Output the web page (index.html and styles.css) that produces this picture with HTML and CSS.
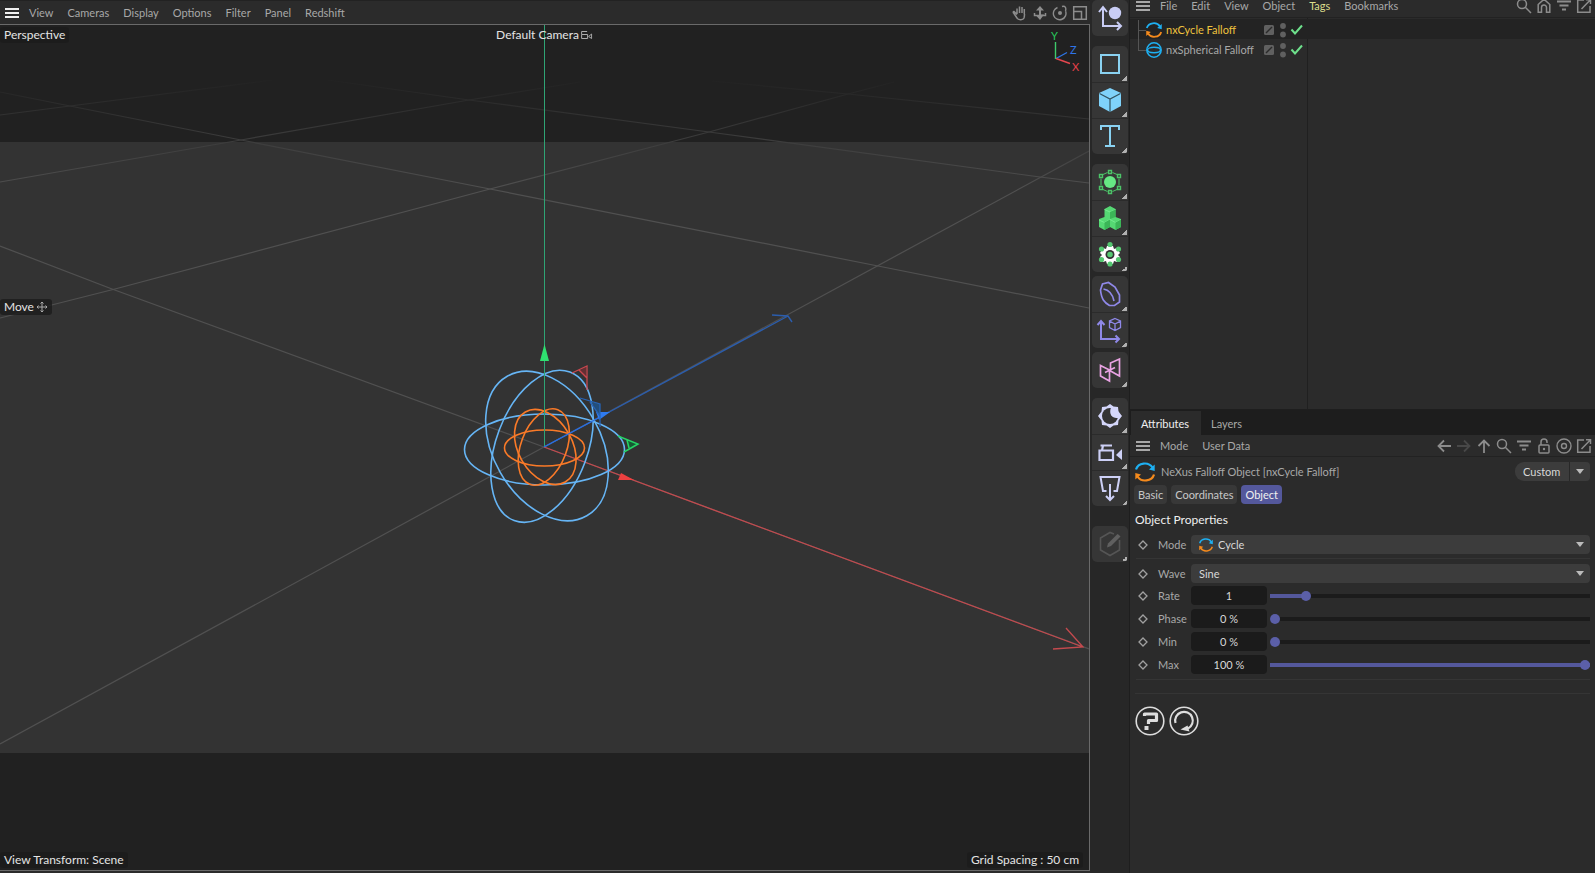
FILE: index.html
```html
<!DOCTYPE html>
<html lang="en">
<head>
<meta charset="utf-8">
<title>Falloff scene</title>
<link rel="stylesheet" href="styles.css">
</head>
<body>
<svg class="defs" aria-hidden="true">
  <symbol id="burger" viewBox="0 0 14 12"><path d="M0 2h14M0 6h14M0 10h14" stroke="currentColor" stroke-width="2"/></symbol>
  <symbol id="cycle" viewBox="0 0 20 20"><g fill="none" stroke-width="2.2"><path d="M1 7.500A9 8 0 0 1 17.500 5.500" stroke="#1eb0f2"/><path d="M19 12.500A9 8 0 0 1 2.500 14.500" stroke="#f58a1c"/></g><path d="M19.700 2.500v6.500l-5.700-1.500z" fill="#1eb0f2"/><path d="M.3 17.500v-6.500l5.700 1.500z" fill="#f58a1c"/></symbol>
  <symbol id="sphere" viewBox="0 0 16 16"><g fill="none" stroke="#1eb0f2" stroke-width="1.500"><circle cx="8" cy="8" r="7.200"/><ellipse cx="8" cy="8" rx="6.500" ry="2.700"/></g></symbol>
  <symbol id="search" viewBox="0 0 16 16"><g fill="none" stroke="currentColor" stroke-width="1.500"><circle cx="6" cy="6" r="4.500"/><path d="M9.300 9.300L15 15"/></g></symbol>
  <symbol id="filter" viewBox="0 0 16 16"><path d="M1 3.500h14M3.500 7.500h9M6 11.500h4" stroke="currentColor" stroke-width="1.800"/></symbol>
  <symbol id="popout" viewBox="0 0 16 16"><path d="M8 2H1.700v12.300H14V8M10 1.700h4.500V6M14.500 1.700L5.500 11" fill="none" stroke="currentColor" stroke-width="1.500"/></symbol>
  <symbol id="home" viewBox="0 0 16 16"><path d="M2.200 14.300V6.500L8 1.200l5.800 5.300v7.800H10.500V9.500a2.500 2.500 0 0 0-5 0v4.800z" fill="none" stroke="currentColor" stroke-width="1.500"/></symbol>
  <symbol id="left" viewBox="0 0 16 16"><path d="M15 8H2.500M8 2.500L2.500 8L8 13.500" fill="none" stroke="currentColor" stroke-width="1.800"/></symbol>
  <symbol id="lock" viewBox="0 0 16 16"><g fill="none" stroke="currentColor" stroke-width="1.500"><rect x="3" y="7" width="10" height="8" rx="1"/><path d="M5 7V4a3 3 0 0 1 6 0v1"/></g><circle cx="8" cy="11" r="1.200" fill="currentColor"/></symbol>
  <symbol id="target" viewBox="0 0 16 16"><g fill="none" stroke="currentColor" stroke-width="1.400"><circle cx="8" cy="8" r="7"/><circle cx="8" cy="8" r="2.500"/></g></symbol>
  <symbol id="slash" viewBox="0 0 10 10"><rect width="10" height="10" rx="1.500" fill="#606060"/><path d="M2 8L8 2" stroke="#2a2a2a" stroke-width="1.500"/></symbol>
  <symbol id="dots" viewBox="0 0 6 16"><circle cx="3" cy="4" r="2.900" fill="#606060"/><circle cx="3" cy="12.500" r="2.900" fill="#606060"/></symbol>
  <symbol id="check" viewBox="0 0 14 12"><path d="M1.500 5.500L5 9.500L12 1.500" fill="none" stroke="#6ee08c" stroke-width="2"/></symbol>
  <symbol id="key" viewBox="0 0 10 10"><path d="M5 1L9 5L5 9L1 5z" fill="none" stroke="#a0a0a0" stroke-width="1.300"/></symbol>
</svg>
<div class="app">
  <main class="view">
    <header class="menubar viewbar">
      <button class="icon-btn bright" aria-label="Menu"><svg class="i-burger"><use href="#burger"/></svg></button>
      <nav class="menus"><button>View</button><button>Cameras</button><button>Display</button><button>Options</button><button>Filter</button><button>Panel</button><button>Redshift</button></nav>
      <div class="tools">
        <button class="icon-btn" aria-label="Pan"><svg class="i16" viewBox="0 0 16 16"><path d="M5 9V3.500M7.500 8V1.500M10 8V2M12.300 9V4M5 9.500L2 6.500c-1 0-1 1 0 2l3 4.500c1 2 6 2.500 7 0c.5-1.500.5-2 .5-4" fill="none" stroke="currentColor" stroke-width="1.500"/></svg></button>
        <button class="icon-btn" aria-label="Dolly"><svg class="i16" viewBox="0 0 16 16"><path d="M8 1l4 4.500H9v4h3L8 15L4 10.500h3v-5H4z" fill="currentColor"/><path d="M2.500 8v2.500h11V8" fill="none" stroke="currentColor" stroke-width="1.500"/></svg></button>
        <button class="icon-btn" aria-label="Orbit"><svg class="i16" viewBox="0 0 16 16"><path d="M5.500 2.500A6.300 6.300 0 1 0 13.500 6M10 1.500c3-1 4.500 1 3.500 4.500" fill="none" stroke="currentColor" stroke-width="1.400"/><circle cx="8" cy="8" r="2" fill="currentColor"/></svg></button>
        <button class="icon-btn" aria-label="Maximize"><svg class="i16" viewBox="0 0 16 16"><path d="M1.700 1.700h12.600v12.600H1.700zM1.700 6.500h7.800v7.800" fill="none" stroke="currentColor" stroke-width="1.500"/></svg></button>
      </div>
    </header>
    <section class="viewport">
      <svg class="scene" viewBox="0 25 1089 845" preserveAspectRatio="xMidYMid slice" role="img" aria-label="Perspective scene">
        <defs>
          <linearGradient id="fade" gradientUnits="userSpaceOnUse" x1="0" y1="80" x2="0" y2="190"><stop offset="0" stop-color="#222"/><stop offset=".5" stop-color="#3a3a3a"/><stop offset="1" stop-color="#505050"/></linearGradient>
        </defs>
        <rect y="25" width="1089" height="845" fill="#212121"/>
        <rect y="142" width="1089" height="611" fill="#333"/>
        <g fill="none" stroke="url(#fade)" stroke-width="1.200">
          <path d="M0 92L70 106L241 140L490 189L878 266L1089 308"/>
          <path d="M0 318L115 289L490 189L709 132L848 94L894 82"/>
          <path d="M0 182L241 140L469 100L580 82"/>
          <path d="M0 115L70 106L272 80"/>
          <path d="M328 80L469 100L709 132L1040 177L1089 183"/>
          <path d="M712 81L848 94L1089 119"/>
          <path d="M0 744L544 447L1089 151"/>
          <path d="M0 246L112 289L544 447L1089 649"/>
        </g>
        <path d="M544.500 25V447" stroke="#2fa475"/>
        <path d="M544 447L788 316M772 315l16 1l4 6" fill="none" stroke="#2b5dad" stroke-width="1.400"/>
        <path d="M544 447L1083 647M1066 628l17 19l-30 2" fill="none" stroke="#c44a4e" stroke-width="1.300"/>
        <g fill="none" stroke="#66b5f5" stroke-width="1.600">
          <ellipse cx="544.500" cy="449.500" rx="80" ry="35.500"/>
          <ellipse cx="547" cy="446" rx="80.300" ry="53.700" transform="rotate(60.300 547 446)"/>
          <ellipse cx="542" cy="446.300" rx="79.300" ry="45.800" transform="rotate(110.600 542 446.300)"/>
        </g>
        <g fill="none" stroke="#fa7a28" stroke-width="1.600">
          <ellipse cx="544.500" cy="448" rx="40" ry="18"/>
          <ellipse cx="545.300" cy="447" rx="40.300" ry="27" transform="rotate(60.300 545.300 447)"/>
          <ellipse cx="543.800" cy="447" rx="39.800" ry="22.900" transform="rotate(110.600 543.800 447)"/>
        </g>
        <path d="M544.500 360V447" stroke="#2fa475"/>
        <path d="M544.500 344l-4.500 17h9z" fill="#2fe070"/>
        <path d="M544 447L604 415" stroke="#2b6fe0" stroke-width="1.400"/>
        <path d="M610 412l-14 0l3 8z" fill="#2f7bf0"/>
        <path d="M634 480l-13-7l-3 7z" fill="#ec4040"/>
        <path d="M579 371l7 7v-11z" fill="#632f33"/><path d="M587 390v-24l-15 7M579 370l8 8" fill="none" stroke="#c9474e" stroke-width="1.300"/>
        <path d="M591 402l9 2v12z" fill="#234f7c"/><path d="M580 398l20 6v23M590 402l10 14" fill="none" stroke="#2764b5" stroke-width="1.300"/>
        <path d="M627 440l11 4l-9 4z" fill="#175a33"/><path d="M618 436l20 8l-14 8M627 440l2 8" fill="none" stroke="#25d565" stroke-width="1.500"/>
        <g fill="none" stroke-width="1.400"><path d="M1055.500 42v17" stroke="#3ecb6b"/><path d="M1056 58.500l11-6" stroke="#2d75e5"/><path d="M1056 58.500l14 5" stroke="#e5474e"/></g>
        <g class="axis"><text x="1051" y="40" fill="#28c95c">Y</text><text x="1070" y="54" fill="#2f75e8">Z</text><text x="1072" y="71" fill="#e5404a">X</text></g>
      </svg>
      <span class="hud hud-tl">Perspective</span>
      <span class="hud hud-top">Default Camera <svg class="i12" viewBox="0 0 12 12"><path d="M1 5.500h6v4H1zM1 5.500V2.500h5.500M8 7.500l3-2.500v4.500z" fill="none" stroke="#aaa"/></svg></span>
      <span class="hud hud-left">Move <svg class="i12" viewBox="0 0 12 12"><path d="M6 1v10M1 6h10M4.500 2.500L6 1l1.500 1.500M4.500 9.500L6 11l1.500-1.500M2.500 4.500L1 6l1.500 1.500M9.500 4.500L11 6L9.500 7.500" fill="none" stroke="#aaa"/></svg></span>
      <span class="hud hud-bl">View Transform: Scene</span>
      <span class="hud hud-br">Grid Spacing : 50 cm</span>
    </section>
  </main>

  <aside class="palette">
    <div class="group far">
      <button aria-label="Place axis"><svg viewBox="0 0 36 36"><g fill="none" stroke="#c9cdf5" stroke-width="2"><path d="M11 7v19h18M7 12l4-5l4 5M25 22l4 4l-4 4"/></g><circle cx="23" cy="13" r="6.200" fill="#c9cdf5"/></svg></button>
    </div>
    <div class="group far">
      <button class="more" aria-label="Spline"><svg viewBox="0 0 36 36"><rect x="9" y="9" width="18" height="18" fill="none" stroke="#8ad2f2" stroke-width="2"/></svg></button>
      <button class="more" aria-label="Cube"><svg viewBox="0 0 36 36"><path d="M18 6l11 5v13l-11 6l-11-6V11z" fill="#7fd2fa"/><path d="M7.500 11.500L18 17l10.500-5.500M18 17V30" fill="none" stroke="#31525f" stroke-width="1.200"/></svg></button>
      <button class="more" aria-label="Text"><svg viewBox="0 0 36 36"><path d="M9 12V8h18v4M18 8v20M13 28h10" fill="none" stroke="#8ad2f2" stroke-width="2"/></svg></button>
    </div>
    <div class="group">
      <button class="more" aria-label="Generator"><svg viewBox="0 0 36 36"><circle cx="18" cy="18" r="6" fill="#66e884"/><g fill="none" stroke="#4cc468" stroke-width="1.400"><path d="M9 14.500v7M27 14.500v7M11 10.500l4.500-2M20.500 8.500l4.500 2M11 25.500l4.500 2M20.500 27.500l4.500-2" stroke-width="1"/><path d="M16.500 6.500h3v3h-3zM16.500 26.500h3v3h-3zM7.500 10.500h3v3h-3zM25.500 10.500h3v3h-3zM7.500 22.500h3v3h-3zM25.500 22.500h3v3h-3z"/></g></svg></button>
      <button class="more" aria-label="Cloner"><svg viewBox="0 0 36 36"><path d="M18 6l5.500 3v8l5.500 2v8l-5.500 3l-5.500-3l-5.500 3L7 27v-8l5.500-2V9z" fill="#55d873"/><path d="M12.500 9.500l5.500 2.500l5.500-2.500M7 20l5.500 2.500L18 19.500l5.500 3L29 19.500" fill="none" stroke="#7df096" stroke-width=".8"/><path d="M18 12v7l5.500-2V9.500zM12.500 22.500V30l5.500-3v-7.500zM23.500 22.500V30l5.500-3v-7.500z" fill="#3bb557"/></svg></button>
      <button class="more" aria-label="Effector"><svg viewBox="0 0 36 36"><path d="M15 10h6l1 3l3-1l3 5l-2 2l2 2l-3 5l-3-1l-1 3h-6l-1-3l-3 1l-3-5l2-2l-2-2l3-5l3 1z" fill="#fff"/><circle cx="18" cy="18.500" r="4.500" fill="#333"/><g fill="#55c872"><circle cx="18" cy="18.500" r="2.800"/><circle cx="18" cy="8.500" r="2.600"/><circle cx="18" cy="28" r="2.600"/><circle cx="9.500" cy="13" r="2.600"/><circle cx="26.500" cy="13" r="2.600"/><circle cx="9.500" cy="23.500" r="2.600"/><circle cx="26.500" cy="23.500" r="2.600"/></g></svg></button>
    </div>
    <div class="group">
      <button class="more" aria-label="Deformer"><svg viewBox="0 0 36 36"><path d="M8.500 14l2-6l6-1.500l6.500 4.500l4.500 8v7l-5 3.500h-5c-5-3-8-6-9-15.500zM11.500 13c6 1 9 5 10.500 12" fill="none" stroke="#8f88e8" stroke-width="1.700"/></svg></button>
      <button class="more" aria-label="Fields"><svg viewBox="0 0 36 36"><g fill="none" stroke="#8f88e8"><path d="M9 9v18h18M5.500 13L9 9l3.500 4M23.500 23.500L27 27l-3.500 3.500" stroke-width="2"/><path d="M23 6.500l5.500 2.500v6.500L23 18.500l-5.500-3V9zM17.500 9l5.500 3l5.500-3M23 12v6" stroke-width="1.300"/></g></svg></button>
    </div>
    <div class="group far">
      <button class="more" aria-label="Symmetry"><svg viewBox="0 0 36 36"><path d="M8.500 13.500l9 4.500v11l-9-5zM18.500 11l9-4v11l0 6l-9-5zM13 20.500l10-5" fill="none" stroke="#e8a2e2" stroke-width="1.700"/></svg></button>
    </div>
    <div class="group wide">
      <button class="more" aria-label="Light"><svg viewBox="0 0 36 36"><path d="M18 6l3.500 2.500l4.500.5l.5 4.500L30 18l-3.500 4.500L26 27l-4.500.5L18 30l-3.500-2.500L10 27l-.5-4.500L6 18l3.500-4.500L10 9l4.500-.5z" fill="#d4d6fa"/><circle cx="18" cy="18" r="8" fill="#343434"/><path d="M19 9.500c-3 8 3 12 8 10c1-7-3-10-8-10z" fill="#d4d6fa"/></svg></button>
      <button class="more" aria-label="Camera"><svg viewBox="0 0 36 36"><path d="M7.500 16.500h13.500v9.500H7.500zM20 11.500H8.500M10 16.500l1-5" fill="none" stroke="#cdd0f6" stroke-width="2.200"/><path d="M24 21l6-6v11z" fill="#cdd0f6"/></svg></button>
      <button class="more" aria-label="Stage"><svg viewBox="0 0 36 36"><path d="M14.500 21H11L8.500 7h19L25 21h-3.500M18 14v16M14 26l4 4l4-4" fill="none" stroke="#cdd0f6" stroke-width="2"/></svg></button>
    </div>
    <div class="group">
      <button class="more" aria-label="Edit asset" disabled><svg viewBox="0 0 36 36"><path d="M22 8l-4-1.500L8.500 12v12L18 29.500l9.500-5.500V14M16 20L27 9" fill="none" stroke="#555" stroke-width="1.600"/><path d="M15 21.500l1-4L25.500 8l3 2.500L19 20z" fill="#606060"/></svg></button>
    </div>
  </aside>

  <aside class="side">
    <section class="objects">
      <header class="menubar objbar">
        <button class="icon-btn" aria-label="Menu"><svg class="i-burger"><use href="#burger"/></svg></button>
        <nav class="menus"><button>File</button><button>Edit</button><button>View</button><button>Object</button><button class="lit">Tags</button><button>Bookmarks</button></nav>
        <div class="tools">
          <button class="icon-btn" aria-label="Search"><svg class="i16"><use href="#search"/></svg></button>
          <button class="icon-btn" aria-label="Home"><svg class="i16"><use href="#home"/></svg></button>
          <button class="icon-btn" aria-label="Filter"><svg class="i16"><use href="#filter"/></svg></button>
          <button class="icon-btn" aria-label="Pop out"><svg class="i16"><use href="#popout"/></svg></button>
        </div>
      </header>
      <ul class="tree">
        <li class="node selected"><span class="branch"></span><svg class="i16"><use href="#cycle"/></svg><span class="name">nxCycle Falloff</span><svg class="i10"><use href="#slash"/></svg><svg class="i-dots"><use href="#dots"/></svg><svg class="i-check"><use href="#check"/></svg></li>
        <li class="node"><span class="branch"></span><svg class="i16"><use href="#sphere"/></svg><span class="name">nxSpherical Falloff</span><svg class="i10"><use href="#slash"/></svg><svg class="i-dots"><use href="#dots"/></svg><svg class="i-check"><use href="#check"/></svg></li>
      </ul>
    </section>
    <section class="attrs">
      <div class="tabs"><button class="tab active">Attributes</button><button class="tab">Layers</button></div>
      <header class="menubar attrbar">
        <button class="icon-btn" aria-label="Menu"><svg class="i-burger"><use href="#burger"/></svg></button>
        <nav class="menus"><button>Mode</button><button>User Data</button></nav>
        <div class="tools">
          <button class="icon-btn" aria-label="Back"><svg class="i16"><use href="#left"/></svg></button>
          <button class="icon-btn dim" aria-label="Forward"><svg class="i16 flip"><use href="#left"/></svg></button>
          <button class="icon-btn" aria-label="Up"><svg class="i16 up"><use href="#left"/></svg></button>
          <button class="icon-btn" aria-label="Search"><svg class="i16"><use href="#search"/></svg></button>
          <button class="icon-btn" aria-label="Filter"><svg class="i16"><use href="#filter"/></svg></button>
          <button class="icon-btn" aria-label="Lock"><svg class="i16"><use href="#lock"/></svg></button>
          <button class="icon-btn" aria-label="Target"><svg class="i16"><use href="#target"/></svg></button>
          <button class="icon-btn" aria-label="Pop out"><svg class="i16"><use href="#popout"/></svg></button>
        </div>
      </header>
      <div class="title"><svg class="i20"><use href="#cycle"/></svg><span>NeXus Falloff Object [nxCycle Falloff]</span>
        <div class="select preset"><select aria-label="Preset"><option>Custom</option></select></div></div>
      <div class="pages"><button>Basic</button><button>Coordinates</button><button class="active">Object</button></div>
      <h2>Object Properties</h2>
      <form class="props">
        <div class="row ruled"><svg class="i10"><use href="#key"/></svg><label for="mode">Mode</label><div class="select with-icon"><svg class="i14"><use href="#cycle"/></svg><select id="mode"><option>Cycle</option></select></div></div>
        <div class="row tight"><svg class="i10"><use href="#key"/></svg><label for="wave">Wave</label><div class="select"><select id="wave"><option>Sine</option></select></div></div>
        <div class="row"><svg class="i10"><use href="#key"/></svg><label for="rate">Rate</label><input class="num" id="rate" value="1"><input type="range" aria-label="Rate slider" value="10" style="--fill:10%"></div>
        <div class="row"><svg class="i10"><use href="#key"/></svg><label for="phase">Phase</label><input class="num" id="phase" value="0 %"><input type="range" aria-label="Phase slider" value="0" style="--fill:0%"></div>
        <div class="row"><svg class="i10"><use href="#key"/></svg><label for="min">Min</label><input class="num" id="min" value="0 %"><input type="range" aria-label="Min slider" value="0" style="--fill:0%"></div>
        <div class="row"><svg class="i10"><use href="#key"/></svg><label for="max">Max</label><input class="num" id="max" value="100 %"><input type="range" aria-label="Max slider" value="100" style="--fill:100%"></div>
      </form>
      <div class="footer">
        <button aria-label="Help"><svg viewBox="0 0 30 30"><circle cx="15" cy="15" r="13.800" fill="none" stroke="#ddd" stroke-width="1.600"/><path d="M9.500 10V8h12v6.500h-8V18" fill="none" stroke="#ddd" stroke-width="3.200" stroke-linejoin="round"/><path d="M9.500 20h4v4h-4z" fill="#ddd"/></svg></button>
        <button aria-label="Reset"><svg viewBox="0 0 30 30"><circle cx="15" cy="15" r="13.800" fill="none" stroke="#ddd" stroke-width="1.600"/><path d="M6.500 17A8.800 8.800 0 1 1 19 22.500" fill="none" stroke="#ddd" stroke-width="2.200"/><path d="M11.500 23.500l7-4l2 6z" fill="#ddd"/></svg></button>
      </div>
    </section>
  </aside>
</div>
</body>
</html>
```
FILE: styles.css
```css
* { box-sizing: border-box; }
body { margin: 0; background: #2b2b2b; color: #a8a8a8; font: 11px/16px Lato, "Open Sans", sans-serif; }
button, select, input { font: inherit; color: inherit; margin: 0; border: 0; padding: 0; background: none; }
svg { display: block; flex: none; }
.defs { position: absolute; width: 0; height: 0; }

.app { display: grid; grid-template-columns: minmax(0, 1fr) 39px 466px; min-height: 100vh; }
.view { display: flex; flex-direction: column; padding-bottom: 2px; }

.menubar { display: flex; align-items: center; color: #a8a8a8; }
.viewbar { height: 24px; padding: 1px 2px 0 5px; border-top: 1px solid #222; }
.menus { display: flex; gap: 14px; margin-left: 10px; }
.tools { display: flex; gap: 4px; margin-left: auto; color: #8c8c8c; }
.bright { color: #f0f0f0; }
.dim { color: #484848; }
.lit { color: #dcde8c; }
.i-burger { width: 14px; height: 12px; }
.i10 { width: 10px; height: 10px; }
.i12 { width: 12px; height: 12px; }
.i14 { width: 14px; height: 14px; }
.i16 { width: 16px; height: 16px; }
.i20 { width: 20px; height: 20px; }
.flip { transform: rotate(180deg); }
.up { transform: rotate(90deg); }

.viewport { position: relative; flex: 1; overflow: hidden; border: solid #6a6a6a; border-width: 1px 1px 1px 0; background: #212121; }
.scene { position: absolute; inset: 0; width: 100%; height: 100%; }
.axis { font: 11px Lato, sans-serif; }
.hud { position: absolute; display: flex; align-items: center; gap: 2px; padding: 0 4px; border-radius: 3px; background: #1c1c1ccc; color: #e4e4e4; font-size: 12px; }
.hud-tl { left: 0; top: 2px; }
.hud-top { left: 50%; top: 2px; transform: translateX(-50%); background: none; }
.hud-left { left: 0; top: 274px; }
.hud-bl { left: 0; bottom: 2px; }
.hud-br { right: 6px; bottom: 2px; }

.palette { display: flex; flex-direction: column; gap: 4px; padding: 0 1px 0 2px; background: #272727; }
.group { display: grid; overflow: hidden; border-radius: 5px; background: #363636; }
.far { margin-bottom: 6px; }
.wide { margin-bottom: 16px; }
.group button { position: relative; height: 36px; }
.group button + button { box-shadow: inset 0 1px #2b2b2b; }
.group svg { width: 36px; height: 36px; }
.more::after { content: ""; position: absolute; right: 1px; bottom: 1px; width: 5px; height: 5px; background: linear-gradient(135deg, transparent 50%, #b0b0b0 50%); }

.side { display: flex; flex-direction: column; border-left: 1px solid #1e1e1e; }
.objects { display: flex; flex-direction: column; flex: 0 0 47%; border-bottom: 1px solid #1e1e1e; }
.objbar { height: 18px; padding: 0 3px 5px 6px; border-bottom: 1px solid #222; }
.tree { flex: 1; margin: 0; padding: 1px 0 0; list-style: none; background: linear-gradient(#202020, #202020) 177px 0 / 1px 100% no-repeat; }
.node { display: flex; align-items: center; height: 20px; padding: 2px 0 0 8px; }
.selected { background: #232323; color: #eec23e; }
.branch { width: 8px; height: 20px; background: linear-gradient(#555, #555) 0 0 / 1px 100% no-repeat, linear-gradient(#555, #555) 0 10px / 8px 1px no-repeat; }
.node:last-child .branch { background-size: 1px 10px, 8px 1px; }
.name { width: 98px; margin-left: 4px; white-space: nowrap; }
.i-dots { width: 6px; height: 16px; margin: 0 4px 0 6px; }
.i-check { width: 14px; height: 12px; }

.tabs { display: flex; height: 25px; padding: 1px 0 0 1px; background: #1d1d1d; }
.tab { padding: 2px 12px 0 10px; }
.tab.active { background: #2b2b2b; color: #f0f0f0; }
.attrbar { height: 22px; padding: 0 3px 0 6px; border-bottom: 1px solid #222; }
.title { display: flex; align-items: center; gap: 6px; height: 28px; padding: 1px 5px 0; }
.select { position: relative; flex: 1; height: 19px; border-radius: 4px; background: #3c3c3c; color: #d8d8d8; }
.select::after { content: ""; position: absolute; right: 6px; top: 7px; border: solid transparent; border-width: 5px 4px 0; border-top-color: #bbb; pointer-events: none; }
.select select { display: block; appearance: none; width: 100%; height: 19px; padding-left: 8px; }
.select svg { position: absolute; left: 8px; top: 3px; }
.with-icon select { padding-left: 27px; }
.preset { flex: none; width: 75px; margin-left: auto; border-radius: 9px 4px 4px 9px; background: linear-gradient(#282828, #282828) 54px 0 / 1px 100% no-repeat #3c3c3c; }
.pages { display: flex; gap: 4px; padding-left: 4px; }
.pages button { height: 19px; padding: 0 4px; border-radius: 4px; background: #383838; color: #c8c8c8; }
.pages .active { background: #54589c; color: #f0f0f0; }
h2 { margin: 0; padding: 8px 0 7px 5px; font-size: 12px; line-height: 16px; font-weight: 400; color: #f0f0f0; }
.props { display: grid; gap: 4px; margin: 0 5px 0 6px; padding-bottom: 5px; border-bottom: 1px solid #353535; }
.row { display: grid; grid-template-columns: 10px 43px 76px minmax(0, 1fr); align-items: center; height: 19px; padding-left: 2px; }
.row label { padding-left: 10px; }
.row .select { grid-column: 3 / -1; }
.ruled { height: 24px; margin-bottom: 1px; padding-bottom: 5px; border-bottom: 1px solid #353535; }
.tight { margin-bottom: -1px; }
.num { height: 19px; width: 76px; border-radius: 4px; background: #1b1b1b; color: #d8d8d8; text-align: center; }
input[type="range"] { appearance: none; width: calc(100% - 3px); height: 10px; margin-left: 3px; background: linear-gradient(#54589c, #54589c) 0 50% / var(--fill) 4px no-repeat, linear-gradient(#1b1b1b, #1b1b1b) 0 50% / 100% 4px no-repeat; }
input[type="range"]::-webkit-slider-thumb { appearance: none; width: 10px; height: 10px; border-radius: 50%; background: #5b5fa8; }
.footer { display: flex; gap: 4px; margin: 13px 5px 0; padding-top: 12px; border-top: 1px solid #353535; }
.footer svg { width: 30px; height: 30px; }
```
